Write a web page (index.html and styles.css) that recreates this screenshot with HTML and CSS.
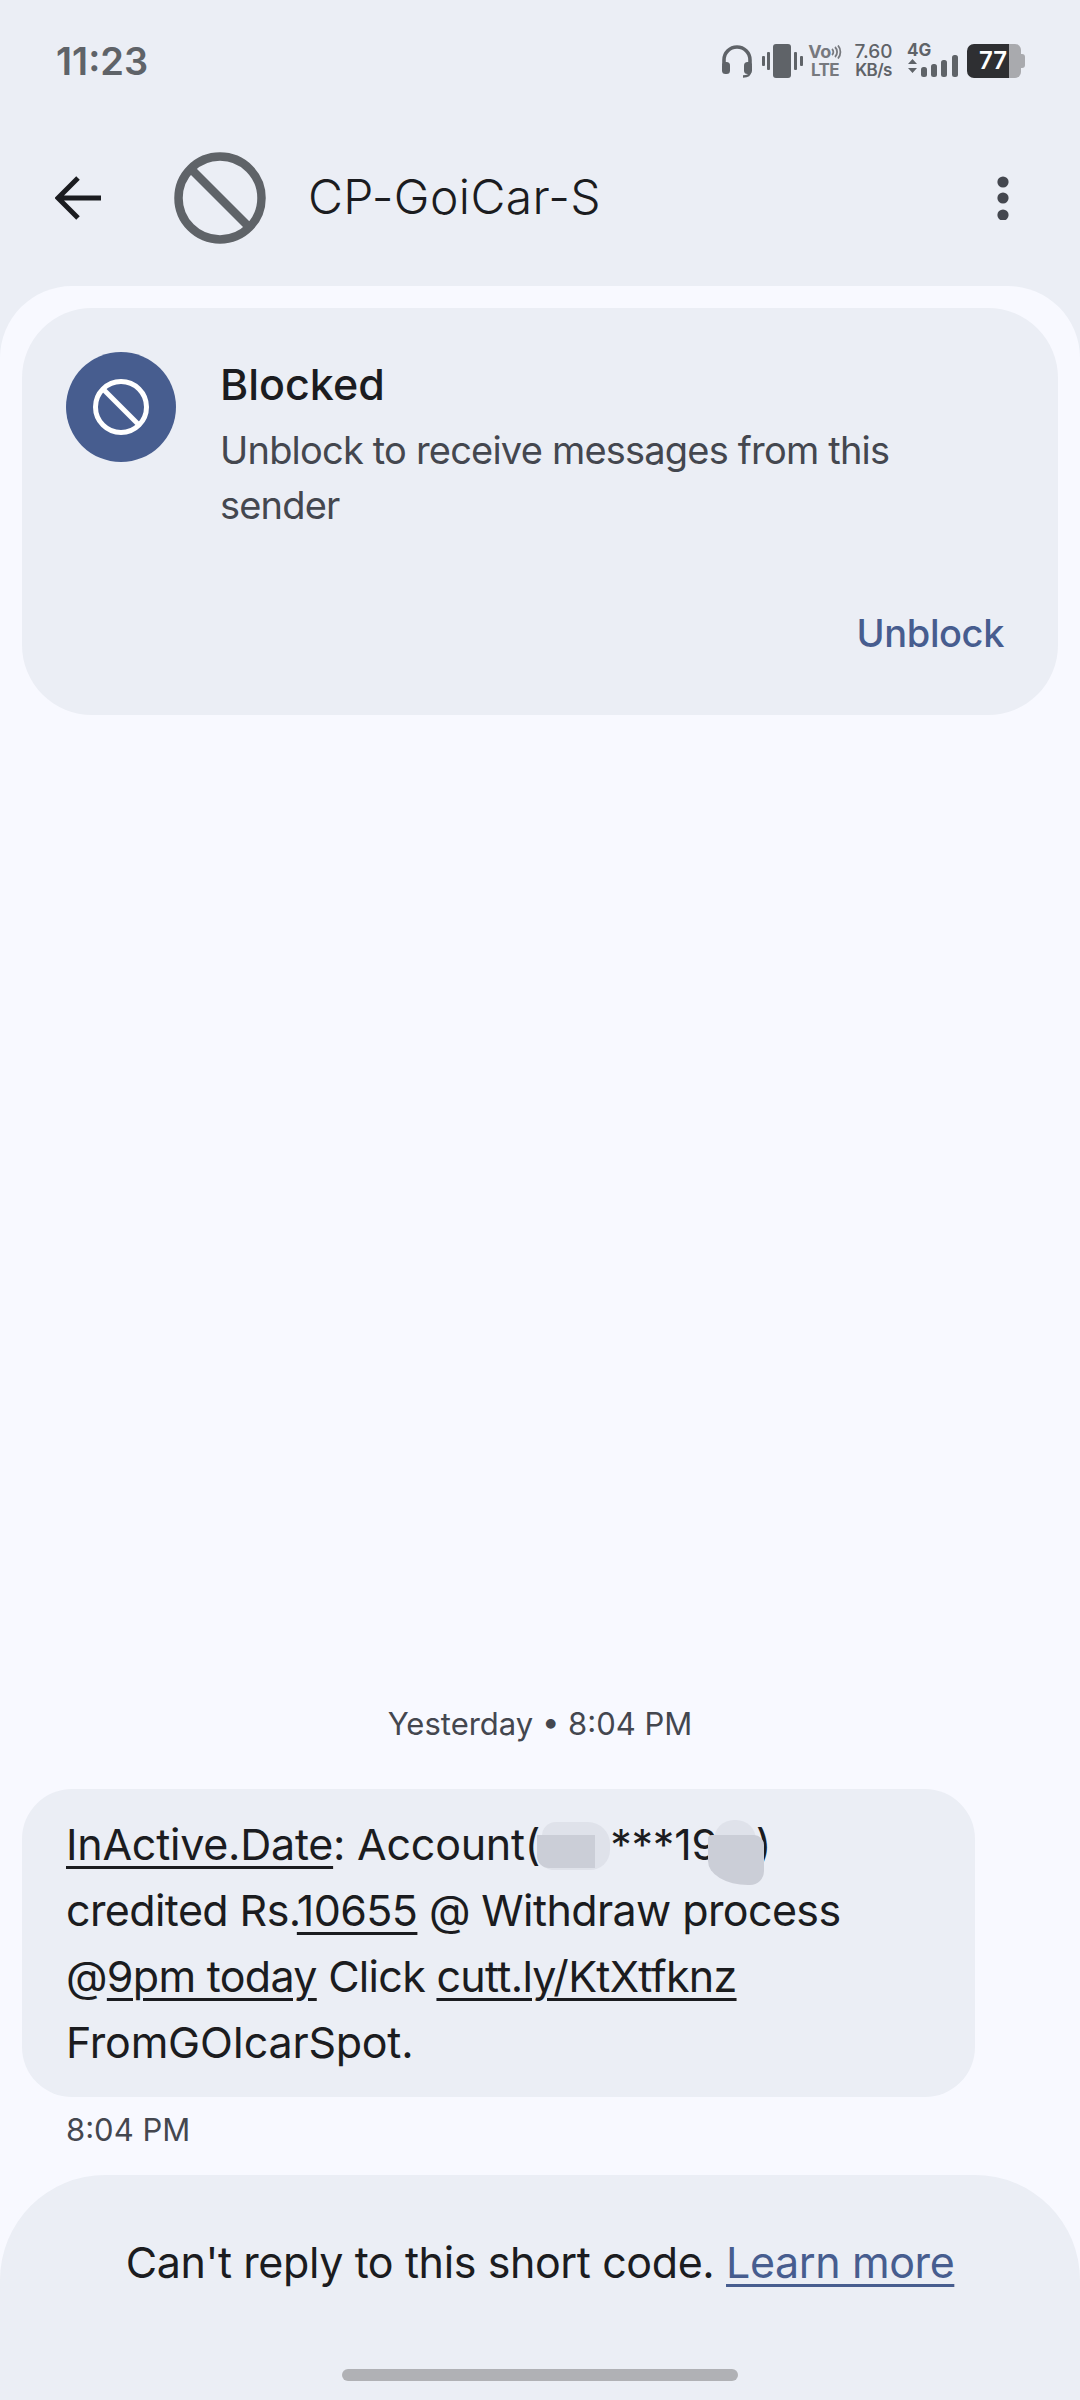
FILE: index.html
```html
<!DOCTYPE html>
<html lang="en">
<head>
    <meta charset="UTF-8">
    <meta name="viewport" content="width=device-width, initial-scale=1.0">
    <title>CP-GoiCar-S</title>
    <link rel="stylesheet" href="styles.css">
</head>
<body>
    <div class="page">
        <div class="status">
            <span class="clock">11:23</span>
            <div class="status-icons">
                <svg class="ic-headset" width="32" height="34" viewBox="0 0 32 34">
                    <path d="M3 21v-5a13 13 0 0 1 26 0v5" fill="none" stroke="#5f6368" stroke-width="3.6"/>
                    <rect x="1" y="18" width="8" height="12" rx="3.5" fill="#5f6368"/>
                    <rect x="23" y="18" width="8" height="12" rx="3.5" fill="#5f6368"/>
                    <path d="M29 28c0 3-3 4.500-7 4.500" fill="none" stroke="#5f6368" stroke-width="2.400"/>
                </svg>
                <svg class="ic-vibrate" width="41" height="34" viewBox="0 0 41 34">
                    <rect x="11" y="0" width="18" height="34" rx="3" fill="#5f6368"/>
                    <rect x="0" y="12" width="3" height="10" rx="1" fill="#5f6368"/>
                    <rect x="5" y="8" width="3" height="18" rx="1" fill="#5f6368"/>
                    <rect x="32" y="8" width="3" height="18" rx="1" fill="#5f6368"/>
                    <rect x="38" y="12" width="3" height="10" rx="1" fill="#5f6368"/>
                </svg>
                <div class="stack volte">
                    <span class="vo">Vo<svg width="11" height="14" viewBox="0 0 11 14"><path d="M1 4a4 4 0 0 1 0 6M4 2a7 7 0 0 1 0 10M7 0.500a10 10 0 0 1 0 13" fill="none" stroke="#77797e" stroke-width="1.800"/></svg></span>
                    <span class="lte">LTE</span>
                </div>
                <div class="stack speed">
                    <span class="speed-num">7.60</span>
                    <span class="speed-unit">KB/s</span>
                </div>
                <div class="signal">
                    <span class="net">4G</span>
                    <svg width="52" height="24" viewBox="0 0 52 24">
                        <path d="M1 10l4.500-5 4.500 5zM1 14l4.500 5 4.500-5z" fill="#5f6368"/>
                        <rect x="14" y="13" width="6" height="10" rx="2.500" fill="#5f6368"/>
                        <rect x="24" y="10" width="6" height="13" rx="2.500" fill="#5f6368"/>
                        <rect x="34" y="6" width="6" height="17" rx="2.500" fill="#5f6368"/>
                        <rect x="45" y="1" width="6" height="22" rx="2.500" fill="#5f6368"/>
                    </svg>
                </div>
                <div class="battery">
                    <span class="battery-level">77</span>
                    <span class="battery-rest"></span>
                    <span class="battery-nub"></span>
                </div>
            </div>
        </div>

        <div class="topbar">
            <svg class="back" width="46" height="44" viewBox="0 0 46 44">
                <path d="M46 22H4M23 2L3 22l20 20" fill="none" stroke="#1b1c20" stroke-width="5"/>
            </svg>
            <svg class="avatar" width="92" height="92" viewBox="0 0 92 92">
                <circle cx="46" cy="46" r="41.500" fill="none" stroke="#5f6368" stroke-width="8.500"/>
                <path d="M17 17l58 58" stroke="#5f6368" stroke-width="8.500"/>
            </svg>
            <span class="title">CP-GoiCar-S</span>
            <svg class="more" width="12" height="44" viewBox="0 0 12 44">
                <circle cx="6" cy="6" r="5.600" fill="#44474f"/>
                <circle cx="6" cy="22" r="5.600" fill="#44474f"/>
                <circle cx="6" cy="39" r="5.600" fill="#44474f"/>
            </svg>
        </div>

        <div class="panel">
            <div class="card">
                <div class="card-main">
                    <div class="card-badge">
                        <svg width="56" height="56" viewBox="0 0 56 56">
                            <circle cx="28" cy="28" r="25.500" fill="none" stroke="#fff" stroke-width="5"/>
                            <path d="M10 10l36 36" stroke="#fff" stroke-width="5"/>
                        </svg>
                    </div>
                    <div class="card-text">
                        <div class="card-title">Blocked</div>
                        <div class="card-desc">Unblock to receive messages from this sender</div>
                    </div>
                </div>
                <div class="card-action">Unblock</div>
            </div>

            <div class="thread">
                <div class="date">Yesterday • 8:04 PM</div>
                <div class="bubble">
                    <div class="line-wide"><u>InActive.Date</u>: Account(<span class="mask mask-a"></span>***19<span class="mask mask-b"></span>)</div>
                    <div>credited Rs.<u>10655</u> @ Withdraw process</div>
                    <div class="line-tight">@<u>9pm today</u> Click <u>cutt.ly/KtXtfknz</u></div>
                    <div class="line-wide">FromGOIcarSpot.</div>
                </div>
                <div class="sent">8:04 PM</div>
            </div>

            <div class="footer">
                <div class="footer-text">Can't reply to this short code. <a class="learn">Learn more</a></div>
                <div class="handle"></div>
            </div>
        </div>
    </div>
</body>
</html>
```

FILE: styles.css
```css
* {
    box-sizing: border-box;
}

body {
    margin: 0;
    font-family: Inter, "Noto Sans", sans-serif;
    background-color: #ebeef5;
    color: #1b1c20;
}

.page {
    width: 1080px;
    height: 2400px;
    display: flex;
    flex-direction: column;
    overflow: hidden;
}

/* status bar */
.status {
    height: 122px;
    padding: 0 55px 0 56px;
    display: flex;
    justify-content: space-between;
    align-items: center;
}

.clock {
    font-size: 38px;
    font-weight: 600;
    color: #5f6368;
}

.status-icons {
    display: flex;
    align-items: center;
    height: 34px;
}

.ic-vibrate {
    margin-left: 9px;
}

.stack {
    display: flex;
    flex-direction: column;
    align-items: center;
    justify-content: space-between;
    height: 34px;
    font-weight: 700;
    color: #77797e;
}

.volte {
    margin-left: 8px;
    width: 28px;
}

.vo {
    display: flex;
    align-items: center;
    font-size: 18px;
    line-height: 15px;
    letter-spacing: -0.5px;
}

.lte {
    font-size: 17px;
    line-height: 15px;
    letter-spacing: -0.5px;
}

.speed {
    margin-left: 16px;
    width: 37px;
    color: #5f6368;
}

.speed-num {
    font-size: 19px;
    line-height: 15px;
    font-weight: 500;
}

.speed-unit {
    font-size: 17px;
    line-height: 15px;
    font-weight: 600;
    letter-spacing: -0.6px;
    white-space: nowrap;
}

.signal {
    margin-left: 15px;
    width: 52px;
    height: 34px;
    display: flex;
    flex-direction: column;
    justify-content: space-between;
}

.net {
    font-size: 17px;
    line-height: 13px;
    font-weight: 700;
    color: #5f6368;
}

.signal svg {
    margin-top: -4px;
}

.battery {
    margin-left: 8px;
    display: flex;
    align-items: center;
}

.battery-level {
    width: 42px;
    height: 34px;
    background: #2e2f32;
    border-radius: 7px 0 0 7px;
    color: #fff;
    font-size: 24px;
    line-height: 34px;
    font-weight: 600;
    text-align: right;
    padding-right: 2px;
}

.battery-rest {
    width: 12px;
    height: 34px;
    background: #a9aaae;
    border-radius: 0 6px 6px 0;
}

.battery-nub {
    width: 4px;
    height: 14px;
    background: #a9aaae;
    border-radius: 0 3px 3px 0;
}

/* app bar */
.topbar {
    height: 164px;
    padding: 0 0 12px 55px;
    display: flex;
    align-items: center;
}

.avatar {
    margin-left: 73px;
}

.title {
    margin: 0 0 3px 42px;
    font-size: 48px;
    font-weight: 300;
    letter-spacing: 0.4px;
}

.more {
    margin-left: auto;
    margin-right: 71px;
}

/* main panel */
.panel {
    flex: 1;
    background: #f8f9ff;
    border-radius: 72px 72px 0 0;
    padding-top: 22px;
    display: flex;
    flex-direction: column;
}

.card {
    margin: 0 22px;
    height: 407px;
    background: #ebeef5;
    border-radius: 70px;
    padding: 44px 54px 0 44px;
}

.card-main {
    display: flex;
}

.card-badge {
    width: 110px;
    height: 110px;
    flex: none;
    border-radius: 50%;
    background: #475d8f;
    display: flex;
    align-items: center;
    justify-content: center;
}

.card-text {
    margin-left: 44px;
    padding-top: 4px;
}

.card-title {
    font-size: 43px;
    line-height: 56px;
    font-weight: 500;
}

.card-desc {
    margin-top: 11px;
    width: 700px;
    font-size: 38px;
    line-height: 55px;
    letter-spacing: -0.8px;
    color: #44474f;
}

.card-action {
    margin-top: 75px;
    text-align: right;
    font-size: 38px;
    line-height: 50px;
    font-weight: 500;
    letter-spacing: -0.4px;
    color: #475d8f;
}

/* conversation */
.thread {
    margin-top: auto;
    padding: 0 22px;
}

.date {
    text-align: center;
    font-size: 31px;
    line-height: 44px;
    color: #44474f;
}

.bubble {
    margin-top: 43px;
    width: 953px;
    height: 308px;
    padding: 22px 44px 0;
    background: #ebeef5;
    border-radius: 50px;
    font-size: 43px;
    line-height: 66px;
    letter-spacing: -0.6px;
}

.bubble u {
    text-decoration-thickness: 3px;
    text-underline-offset: 6px;
}

.line-wide {
    letter-spacing: -0.25px;
}

.line-tight {
    letter-spacing: -0.7px;
}

/* smudges hiding the account digits */
.mask {
    display: inline-block;
    position: relative;
    height: 40px;
}

.mask::before,
.mask::after {
    content: "";
    position: absolute;
}

.mask::before {
    background: #dfe2ea;
}

.mask::after {
    background: #cbced7;
}

.mask-a {
    width: 70px;
}

.mask-a::before {
    left: 2px;
    top: 2px;
    width: 68px;
    height: 48px;
    border-radius: 14px 22px 20px 10px;
}

.mask-a::after {
    left: -3px;
    top: 15px;
    width: 58px;
    height: 33px;
    border-radius: 0 0 0 12px;
}

.mask-b {
    width: 38px;
}

.mask-b::before {
    left: -4px;
    top: 0;
    width: 42px;
    height: 40px;
    border-radius: 20px 20px 0 0;
}

.mask-b::after {
    left: -10px;
    top: 15px;
    width: 56px;
    height: 50px;
    border-radius: 4px 10px 14px 40px / 4px 10px 14px 24px;
}

.sent {
    margin: 11px 0 0 44px;
    font-size: 31px;
    line-height: 44px;
    color: #44474f;
}

/* footer */
.footer {
    position: relative;
    margin-top: 23px;
    height: 225px;
    background: #ebeef5;
    border-radius: 105px 105px 0 0;
}

.footer-text {
    padding-top: 59px;
    text-align: center;
    font-size: 43px;
    line-height: 56px;
    letter-spacing: -0.4px;
}

.learn {
    color: #475d8f;
    text-decoration: underline;
    text-decoration-thickness: 3px;
    text-underline-offset: 6px;
}

.handle {
    position: absolute;
    left: 342px;
    bottom: 19px;
    width: 396px;
    height: 12px;
    border-radius: 6px;
    background: #b0b1b5;
}
```
